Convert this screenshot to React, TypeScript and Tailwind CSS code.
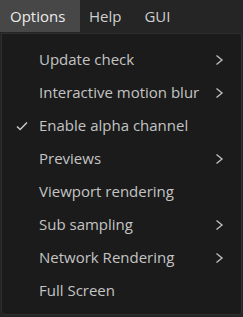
import React from "react";

interface MenuItem {
  label: string;
  sub?: boolean;
  checked?: boolean;
}

const items: MenuItem[] = [
  { label: "Update check", sub: true },
  { label: "Interactive motion blur", sub: true },
  { label: "Enable alpha channel", checked: true },
  { label: "Previews", sub: true },
  { label: "Viewport rendering" },
  { label: "Sub sampling", sub: true },
  { label: "Network Rendering", sub: true },
  { label: "Full Screen" },
];

const Chevron = () => (
  <svg width="9" height="12" viewBox="0 0 9 12" fill="none">
    <path d="M1.5 1.5 L7 6 L1.5 10.5" stroke="#bdbdbd" strokeWidth="1.4" />
  </svg>
);

const Check = () => (
  <svg width="12" height="10" viewBox="0 0 12 10" fill="none">
    <path d="M1 5.5 L4.2 8.5 L11 1.5" stroke="#c8c8c8" strokeWidth="1.5" />
  </svg>
);

export default function App() {
  return (
    <div
      className="w-[243px] h-[317px] bg-[#252525] flex flex-col text-[15px]"
      style={{ fontFamily: '"Open Sans", "Noto Sans", sans-serif' }}
    >
      <div className="h-[32px] flex items-stretch text-[#cfcfcf]">
        <div className="w-[80px] bg-[#474747] text-[#ececec] flex items-center pl-[10px]">
          Options
        </div>
        <div className="flex items-center pl-[9px] pr-[23px]">Help</div>
        <div className="flex items-center">GUI</div>
      </div>
      <div className="mx-[1px] mt-[1px] mb-[2px] flex-1 bg-[#1b1b1b] border border-[#2f2f2f] rounded-b-[4px] pt-[9px]">
        {items.map((it, i) => (
          <div key={i} className="h-[33px] flex items-center text-[#c4c4c4]">
            <div className="w-[37px] flex justify-center pl-[3px]">
              {it.checked && <Check />}
            </div>
            <div className="flex-1">{it.label}</div>
            <div className="w-[26px] flex justify-start">
              {it.sub && <Chevron />}
            </div>
          </div>
        ))}
      </div>
    </div>
  );
}
